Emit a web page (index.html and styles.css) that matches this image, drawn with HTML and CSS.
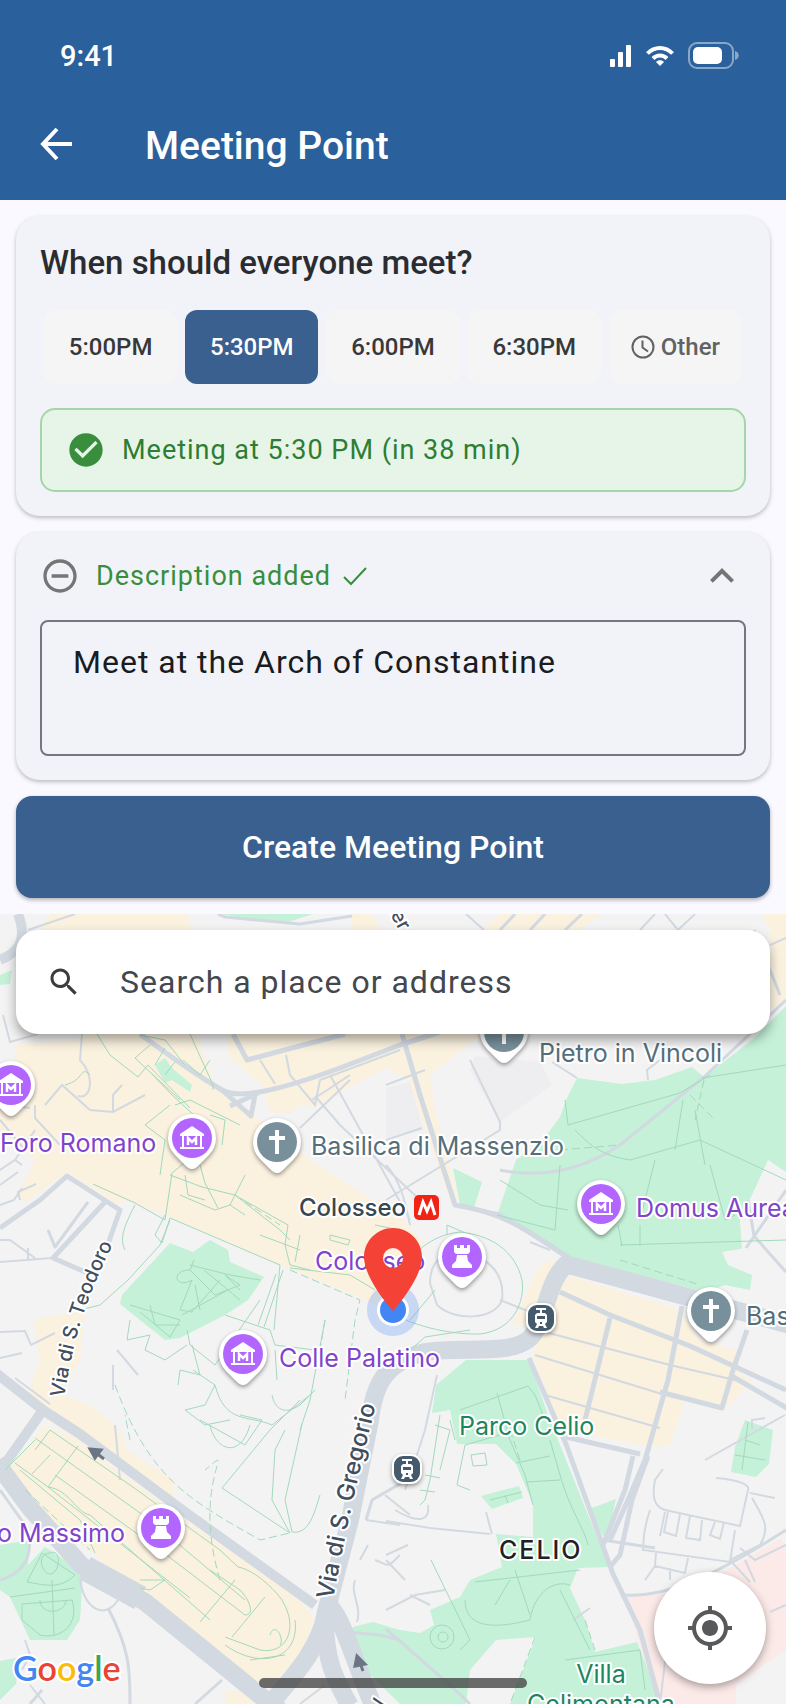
FILE: index.html
```html
<!DOCTYPE html>
<html lang="en">
  <head>
    <meta charset="UTF-8" />
    <meta name="viewport" content="width=device-width, initial-scale=1.0" />
    <title>Meeting Point</title>
    <link rel="stylesheet" href="styles.css">
  </head>
  <body>
    <header class="app-header">
      <div class="status-bar">
        <span class="status-time">9:41</span>
        <div class="status-icons">
          <svg width="22" height="24" viewBox="0 0 22 24" fill="#fff">
            <rect x="0" y="15" width="5" height="8" rx="1" />
            <rect x="8" y="8" width="5" height="15" rx="1" />
            <rect x="16" y="1" width="5" height="22" rx="1" />
          </svg>
          <svg width="28" height="22" viewBox="0 0 28 22" fill="none" stroke="#fff" stroke-width="4">
            <path d="M1.5 8.500C8.500 1 19.500 1 26.500 8.500" />
            <path d="M7 13.500C11 9.500 17 9.500 21 13.500" />
            <path d="M14 21l-4-4c2-2.200 6-2.200 8 0z" fill="#fff" stroke="none" />
          </svg>
          <svg width="52" height="28" viewBox="0 0 52 28">
            <rect x="1" y="1" width="44" height="25" rx="8" fill="none" stroke="#fff" stroke-opacity="0.45" stroke-width="2" />
            <rect x="5" y="5" width="29" height="17" rx="5" fill="#fff" />
            <path d="M47 9c5 1 5 8 0 9z" fill="#fff" fill-opacity="0.45" />
          </svg>
        </div>
      </div>
      <div class="toolbar">
        <button class="back-button" aria-label="Back">
          <svg width="34" height="38" viewBox="0 0 34 38" fill="none" stroke="#fff" stroke-width="4">
            <path d="M18 2L4 17l14 15M4 17h29" />
          </svg>
        </button>
        <h1>Meeting Point</h1>
      </div>
    </header>

    <main>
      <div class="form">
        <section class="card">
          <h2>When should everyone meet?</h2>
          <div class="times">
            <button class="time">5:00PM</button>
            <button class="time selected">5:30PM</button>
            <button class="time">6:00PM</button>
            <button class="time">6:30PM</button>
            <button class="time other">
              <svg width="24" height="24" viewBox="0 0 24 24" fill="none" stroke="currentColor" stroke-width="2">
                <circle cx="12" cy="12" r="10.500" />
                <path d="M11.500 5.500V12.500l5.500 4" />
              </svg>
              Other
            </button>
          </div>
          <div class="notice">
            <svg width="40" height="40" viewBox="0 0 24 24" fill="#388e3c">
              <path d="M12 2C6.480 2 2 6.480 2 12s4.480 10 10 10 10-4.480 10-10S17.520 2 12 2zm-2 15l-5-5 1.410-1.410L10 14.170l7.590-7.590L19 8l-9 9z" />
            </svg>
            <span>Meeting at 5:30 PM (in 38 min)</span>
          </div>
        </section>

        <section class="card">
          <button class="description-toggle">
            <svg width="40" height="40" viewBox="0 0 24 24" fill="#757575">
              <path d="M7 11v2h10v-2H7zm5-9C6.480 2 2 6.480 2 12s4.480 10 10 10 10-4.480 10-10S17.520 2 12 2zm0 18c-4.410 0-8-3.590-8-8s3.590-8 8-8 8 3.590 8 8-3.590 8-8 8z" />
            </svg>
            <label for="description">Description added</label>
            <svg width="28" height="28" viewBox="0 0 28 28" fill="none" stroke="#388e3c" stroke-width="2">
              <path d="M3 15l7 7L25 6" />
            </svg>
            <svg class="chevron" width="24" height="24" viewBox="6 6 12 12" fill="#757575">
              <path d="M12 8l-6 6 1.410 1.410L12 10.830l4.590 4.580L18 14z" />
            </svg>
          </button>
          <textarea id="description">Meet at the Arch of Constantine</textarea>
        </section>

        <button class="create-button">Create Meeting Point</button>
      </div>

      <div class="map">
        <svg class="map-canvas" viewBox="0 914 786 790" preserveAspectRatio="xMidYMin slice">
          <defs>
            <path id="pin" d="M0 31C-3 31-5 29-7 27L-17 17A24 24 0 1 1 17 17L7 27C5 29 3 31 0 31z" />
            <g id="museum">
              <use href="#pin" class="pin" />
              <circle r="20" fill="#b266ff" />
              <path d="M-12-4L0-12 12-4v2H-12z" fill="#fff" />
              <path d="M-9-3V9M9-3V9" stroke="#fff" stroke-width="2" />
              <path d="M-12 10H12" stroke="#fff" stroke-width="2" />
              <path d="M-4 7V0l4 4 4-4v7" fill="none" stroke="#fff" stroke-width="2.500" />
            </g>
            <g id="castle">
              <use href="#pin" class="pin" />
              <circle r="20" fill="#b266ff" />
              <path d="M-8-12h3v3h3v-3h4v3h3v-3h3v7l-2 2H-6l-2-2zM-5-2H5L6 4l4 4v3H-10V8l4-4z" fill="#fff" />
            </g>
            <g id="church">
              <use href="#pin" class="pin" />
              <circle r="20" fill="#78909c" />
              <path d="M-2-12h4v6h6v4H2v14h-4V-2h-6v-4h6z" fill="#fff" />
            </g>
            <g id="tram">
              <rect x="-15" y="-15" width="30" height="30" rx="11" class="pin" />
              <rect x="-13" y="-13" width="26" height="26" rx="9" fill="#455a6c" />
              <path d="M-5-10H5v2H1v3h3l2 2v7L4 6l2 4H3L2 8h-4l-1 2h-3l2-4-2-2v-7l2-2h3v-3h-4z" fill="#fff" />
              <path d="M-4-2h8v3h-8zM-1 4h2v2h-2z" fill="#455a6c" />
            </g>
          </defs>

          <rect y="914" width="786" height="790" fill="#f4f3f4" />

          <!-- built up areas -->
          <g fill="#faf1df">
            <path d="M50 914H188L192 930H40zM352 914H372L380 930H352zM500 914H600L580 930H480zM762 914H786V1000L770 1010V930z" />
            <path d="M15 1045L75 1040 85 1034H197L215 1085 250 1112 310 1160 400 1217 425 1245 375 1305 360 1298 280 1265 165 1215 125 1200 118 1205 68 1172 25 1202 18 1195 35 1160 0 1130V1075L15 1060z" />
            <path d="M228 1034H483L455 1055 430 1075 435 1110 458 1200 450 1200 432 1150 408 1080 386 1068 314 1107 300 1105 290 1114 270 1112 262 1085 228 1056z" />
            <path d="M33 1320L85 1310 80 1360 60 1395 90 1405 120 1430 127 1450 173 1480 173 1497 150 1490 53 1424 25 1400 40 1360z" />
            <path d="M45 1425L75 1440 200 1530 300 1600 314 1618 300 1660 262 1690 200 1645 140 1600 95 1555 30 1505 6 1472z" />
            <path d="M570 1276L680 1310 700 1340 735 1350 740 1375 752 1380 730 1405 685 1400 670 1445 655 1447 560 1430 533 1355 555 1290zM535 1274L548 1260 555 1262 525 1325 512 1325zM225 1704V1692L245 1690 255 1704z" />
          </g>
          <path d="M475 1056L540 1062 552 1085 500 1122 470 1070zM386 1088L410 1082 423 1130 386 1138z" fill="#eeedef" />
          <path d="M626 1597L663 1594 720 1574 780 1539 786 1545V1650L736 1684V1704H656z" fill="#fceae8" />

          <!-- parks -->
          <g fill="#c4f1d7">
            <path d="M222 914H313L285 923 250 920zM0 975L12 970 10 984 0 985z" />
            <path d="M577 1078L622 1084 655 1080 692 1067 704 1077 752 1040 786 1006V1180L769 1160 740 1220 746 1248 722 1252 728 1265 752 1275 750 1290 725 1285 705 1292 640 1275 565 1255 526 1233 497 1215 516 1160 543 1140 560 1117 566 1100z" />
            <path d="M453 1168L482 1182 474 1208 460 1205z" />
            <path d="M170 1243L193 1252 210 1240 228 1250 230 1262 264 1277 248 1300 225 1315 180 1338 165 1340 120 1304 122 1295z" />
            <path d="M155 1065L165 1058 172 1068 192 1085 190 1092 172 1080 165 1083z" />
            <path d="M466 1360H529L548 1415 609 1567 578 1568 570 1588 585 1620 595 1652 637 1642 650 1675 660 1704H510L536 1637 496 1640 470 1670 466 1704H400L345 1650 353 1627 373 1622 400 1630 420 1633 434 1625 430 1610 460 1597 470 1580 502 1567 496 1534 533 1537 533 1504 516 1464 496 1444H457L450 1410 432 1413 436 1385z" />
            <path d="M481 1496L519 1486 523 1498 492 1509zM589 1509L616 1499 608 1534 603 1536zM745 1420L773 1430 769 1464 756 1477 731 1472 735 1447z" />
            <path d="M0 1545L30 1540 28 1565 45 1547 83 1572 80 1620 67 1640 30 1640 10 1597 0 1590zM0 1661L20 1657 16 1684 0 1700z" />
          </g>
          <path d="M768 1160L786 1172V1245L742 1250 740 1222z" fill="#f4f3f4" />

          <!-- main roads -->
          <g class="road">
            <path class="w12" d="M18 914C30 945 12 955 0 960" />
            <path class="w6" d="M140 1034C175 1060 205 1080 222 1090S280 1090 340 1068L400 1045 440 1032" />
            <path class="w6" d="M233 1034L247 1060 345 1034M255 1095L251 1116 222 1090M230 1106L258 1093" />
            <path class="w6" d="M402 1034L420 1095 455 1205C500 1212 520 1225 569 1258" />
            <path class="w6" d="M0 1228L40 1200 67 1176 120 1210 108 1244M105 1202L53 1258 90 1274" />
            <path class="w4" d="M88 1202L55 1247 48 1230M218 914L225 917 300 924 352 916" />
            <path class="w12" d="M-4 1373L43 1410 80 1434 185 1512 315 1605" />
            <path class="w12" d="M43 1410L2 1468" />
            <path class="w18" d="M-4 1462L30 1508 82 1566 145 1602 262 1697 280 1710" />
            <path class="w25" d="M85 1568L140 1598" />
            <path class="w18" d="M569 1262C545 1280 548 1320 530 1338S460 1346 425 1352C385 1362 374 1385 370 1420L350 1520 326 1612C320 1650 290 1680 270 1704" />
            <path class="w18" d="M330 1606C345 1625 350 1650 375 1710M325 1620C325 1660 335 1680 350 1706" />
            <path class="w18" d="M565 1264L640 1284 790 1325" />
            <path class="w6" d="M560 1292L610 1315 690 1346 786 1390M730 1375L790 1410" />
            <path class="w6" d="M610 1318L585 1420M682 1306L668 1380 645 1460 628 1500 610 1540M747 1330L733 1370 722 1408 660 1392" />
            <path class="w6" d="M529 1358L566 1444 613 1574 640 1630 660 1704M633 1456L625 1490 603 1545M648 1456L632 1500 620 1555 610 1567M566 1437L640 1454" />
            <path class="w4" d="M624 1595C670 1598 720 1572 786 1530M603 1540L655 1548M366 1520L372 1500 410 1478M108 1608C130 1650 130 1670 130 1704M195 1704L222 1680M400 1640L380 1635 345 1632" />
            <path class="w4" d="M570 1260L500 1214 455 1205 402 1035M515 914L500 930M545 914L530 930M582 914L565 930M754 930L780 995M748 1200L754 1236 786 1272M746 1248L786 1190" />
            <path class="w4" d="M386 1629L450 1685 470 1704M30 1704L42 1690M0 1580C35 1570 32 1540 25 1525L0 1490M500 1170C550 1180 590 1165 620 1145L704 1077 786 1000" />
          </g>

          <!-- streets -->
          <g class="street">
            <path d="M0 1262L52 1258M0 1240L10 1240 35 1258M28 1248V1260M0 1332L25 1331 31 1345 55 1333M0 1358L22 1353M50 1404L15 1378M20 1200L18 1192 36 1184M35 1105V1118L60 1145M45 1105L62 1085 90 1110 113 1112 145 1095M113 1112V1095L122 1085" />
            <path d="M82 1034L80 1060C95 1075 92 1100 78 1096M3 1015L10 1042 38 1034M28 930L75 914M260 1060L275 1084M286 1055L290 1075 315 1105 320 1080 400 1050M330 1075L410 1220M300 1128L350 1080M315 1096L340 1125 420 1200M312 1100L350 1075" />
            <path d="M386 1085L425 1070M386 1140L422 1128M470 1060L500 1122 500 1130 386 1200M552 1062L577 1078M648 1080L647 1070 660 1060M466 914L484 930M640 930L655 914M665 914L678 930 695 914M770 945L786 938M386 1165C400 1180 405 1200 410 1225" />
            <path d="M430 1283C430 1260 445 1250 465 1253 490 1258 505 1275 502 1300 495 1320 455 1322 437 1305zM500 1300L530 1312M545 1332L670 1365 735 1380M535 1355L600 1375 665 1395M545 1395L660 1428M785 1415L705 1460M550 1250L530 1242" />
            <path d="M663 1469L655 1480C650 1505 660 1508 665 1510L740 1526 748 1490C750 1485 740 1480 716 1478M750 1493L775 1498M752 1498C765 1520 770 1528 760 1545L730 1560M650 1510C640 1540 645 1545 643 1550L730 1562 735 1530M665 1512L660 1536M668 1512L664 1532 676 1536 680 1514M690 1516L686 1538 700 1540 702 1520M715 1522L710 1535 720 1539 724 1522M656 1552L655 1566 685 1573 688 1558M655 1566L645 1580M670 1568V1580" />
            <path d="M386 1521L430 1528 490 1534M486 1512L492 1534M386 1555L408 1545M386 1560L405 1580M386 1610L415 1595 445 1590M410 1595L430 1605M355 1580C350 1595 362 1605 357 1622M395 1510C420 1525 430 1520 428 1505M366 1520L400 1525M368 1545L360 1560M385 1495L410 1515M375 1560C390 1565 385 1570 400 1555M120 1480L115 1425M117 1350L138 1375M113 1365V1390" />
            <path d="M590 1608L573 1620M730 1560L750 1582M786 1605L770 1612M740 1548L755 1560 786 1545M660 1704L665 1662 720 1660M752 1430V1420L765 1418M745 1560L755 1582M80 1580C85 1610 105 1620 118 1600M25 1640L30 1655 22 1670M30 1685L45 1704M300 1704L325 1685" />
            <path d="M437 1375L425 1430 412 1470 405 1490M0 1170L15 1160 22 1165M0 1185L18 1172M0 1205L14 1200 22 1188M5 1105L30 1108M0 1120L25 1150M15 1160L35 1130" />
          </g>

          <!-- footpaths -->
          <g class="path">
            <path d="M97 1034L110 1055 138 1077 148 1065 190 1108M150 1045L135 1058 180 1100M150 1072L172 1095 210 1130M165 1048L155 1065M175 1062L165 1075M190 1034L213 1085V1090M183 1060L200 1075 210 1060M140 1035L165 1040 185 1065M175 1105L190 1100 210 1110 240 1125M210 1115L225 1120 222 1145M145 1125L170 1105M145 1125L165 1140 160 1175M65 1085C85 1080 80 1065 90 1075" />
            <path d="M93 1184L135 1203 165 1220 172 1173 188 1160M135 1205C122 1230 120 1240 125 1250M165 1215L155 1235 162 1243 170 1218 280 1265 274 1330M170 1220L160 1245 128 1280 100 1305 80 1310M180 1195L215 1210 230 1205 245 1215M205 1183L200 1165M170 1175L202 1187 235 1195 280 1230 290 1240M240 1198L288 1225 285 1245 290 1265 310 1270M330 1235L350 1240 348 1245 330 1240zM205 1183L218 1208M185 1175L188 1195 205 1200M245 1175L230 1205M290 1268L350 1275 375 1290M260 1235L300 1250M300 1235L295 1262M375 1225L400 1230" />
            <path d="M258 1325L276 1274M264 1327L283 1270M194 1260L190 1270C170 1270 175 1290 192 1280L180 1310 192 1312 220 1280M190 1270L215 1295 240 1285 225 1275 240 1290M195 1285L200 1310M130 1305L180 1320 170 1337 140 1312M150 1305L155 1325 180 1325M190 1265L230 1275 260 1280M204 1270L240 1300M182 1315L228 1290" />
            <path d="M130 1320L127 1340 150 1335 145 1350 165 1360 187 1345M187 1330L190 1345 215 1365 260 1300M192 1345L200 1375 180 1370 178 1385M193 1370L215 1385 205 1405 185 1410 205 1425 230 1420M215 1385C225 1425 250 1415 272 1425L310 1395M240 1415L262 1420 245 1445 200 1420M272 1395C275 1410 285 1415 300 1405L315 1390M225 1315L270 1330 275 1345 315 1350M275 1350L277 1380M300 1400L270 1430 222 1488M285 1430L275 1450 272 1500 290 1533M302 1424L285 1500 292 1532C310 1535 315 1510 320 1495M222 1488L290 1533M250 1425C240 1460 215 1450 210 1425M325 1320L310 1400 300 1430" />
            <path d="M387 1310C400 1320 440 1335 480 1334 515 1330 525 1300 522 1280 515 1250 490 1235 460 1232 430 1235 410 1255 400 1275L388 1300M410 1350L425 1337 470 1330M447 1235V1225L470 1235M435 1290L410 1320" />
            <path d="M565 1100L568 1125 680 1093 710 1075M575 1130C590 1145 600 1155 630 1160L700 1140 786 1180M683 1100L675 1150M655 1160L640 1220M560 1165L555 1230 497 1215M620 1245L786 1240M695 1110L705 1165M618 1225L622 1246M640 1225V1246M710 1165L725 1220 735 1215M702 1078L786 1065M500 1180L540 1205 568 1210" />
            <path d="M35 1450L50 1430 130 1485 220 1550 238 1567C255 1570 275 1590 282 1600 300 1630 285 1655 260 1650L225 1637M15 1463L48 1487C70 1490 75 1512 90 1515M48 1487L78 1446M32 1474L50 1455M35 1438L150 1520 245 1600M55 1475L160 1550 245 1615C255 1615 250 1600 240 1590L210 1570M48 1487L190 1598M35 1440L5 1470M20 1470L80 1520 95 1553M90 1515L210 1620M232 1637L265 1597M200 1622L235 1580M225 1645C260 1670 300 1660 295 1620M250 1660L285 1655M270 1635C275 1620 285 1640 280 1645M140 1580L165 1580 150 1590 140 1588" />
            <path d="M27 1582L42 1553 75 1575C60 1590 45 1585 27 1582zM50 1553C30 1555 50 1590 58 1565 60 1555 55 1550 50 1553M10 1597L75 1588M22 1604L72 1600C80 1625 60 1640 40 1635L22 1620zM52 1580L54 1635M40 1600C40 1615 65 1615 66 1600" />
            <path d="M440 1415L430 1480 425 1500 420 1505M435 1425L450 1430 440 1470M425 1475L440 1478M420 1490L435 1492M450 1420L455 1440M470 1490L457 1485 465 1445 500 1435M471 1455L485 1453 487 1465 473 1466zM490 1500L522 1492M505 1495L508 1503M510 1440L525 1475 533 1505M550 1440L560 1475C570 1510 585 1530 588 1545M516 1463L550 1456M526 1482L560 1480M460 1410L528 1386 535 1395 545 1420M497 1393L510 1440" />
            <path d="M475 1582L580 1570M465 1600C465 1635 510 1625 530 1620C535 1590 555 1580 570 1585M515 1570L530 1615M510 1580L495 1605M431 1560L470 1640 460 1650M430 1637A12 12 0 1 1 454 1637A12 12 0 1 1 430 1637M438 1637A5 5 0 1 1 448 1637A5 5 0 1 1 438 1637M560 1590L590 1650M565 1660L640 1650 645 1690M745 1440L760 1445M748 1422L742 1470M735 1455L765 1460" />
          </g>
          <g class="path dashed">
            <path d="M115 1385C150 1480 190 1500 260 1540L290 1533M235 1195L280 1225M290 1270L360 1300 355 1320 345 1400M325 1320L320 1350M520 1460L510 1430M560 1150L620 1145M690 1095L715 1120M704 1080L695 1120M25 1490L90 1550M620 1260L700 1285M535 1637L510 1704M220 1580C190 1480 240 1440 205 1470M585 1620L595 1650M130 1440L125 1415" />
          </g>

          <!-- one way arrows -->
          <path d="M104 1459L95 1452M90 1449l11 1-6 8z" class="arrow" />
          <path d="M363 1671L359 1660M357 1656l8 8-10 2z" class="arrow" />

          <!-- place names -->
          <g class="label museum">
            <text x="0" y="1152">Foro Romano</text>
            <text x="636" y="1217">Domus Aurea</text>
            <text x="315" y="1270">Colosseo</text>
            <text x="279" y="1367">Colle Palatino</text>
            <text x="125" y="1542" text-anchor="end">o Massimo</text>
          </g>
          <g class="label landmark">
            <text x="539" y="1062">Pietro in Vincoli</text>
            <text x="311" y="1155">Basilica di Massenzio</text>
            <text x="746" y="1325">Bas</text>
          </g>
          <g class="label park">
            <text x="459" y="1435">Parco Celio</text>
            <text x="601" y="1683" text-anchor="middle">Villa</text>
            <text x="601" y="1713" text-anchor="middle">Celimontana</text>
          </g>
          <text class="label station" x="299" y="1216">Colosseo</text>
          <text class="label district" x="499" y="1559">CELIO</text>
          <path id="teodoro" d="M64 1398C72 1350 80 1310 114 1242" fill="none" />
          <path id="gregorio" d="M333 1600C343 1545 352 1500 382 1380" fill="none" />
          <text class="label street-name"><textPath href="#teodoro">Via di S. Teodoro</textPath></text>
          <text class="label street-name big"><textPath href="#gregorio">Via di S. Gregorio</textPath></text>
          <text class="label street-name" transform="translate(388 910) rotate(62)">ler</text>
          <text class="label street-name" transform="translate(384 1714) rotate(-75)">V</text>

          <use href="#museum" x="11" y="1085" />
          <use href="#museum" x="192" y="1138" />
          <use href="#museum" x="243" y="1354" />
          <use href="#museum" x="601" y="1204" />
          <use href="#castle" x="462" y="1257" />
          <use href="#castle" x="161" y="1528" />
          <use href="#church" x="504" y="1032" />
          <use href="#church" x="277" y="1142" />
          <use href="#church" x="711" y="1311" />
          <use href="#tram" x="541" y="1318" />
          <use href="#tram" x="407" y="1469" />
          <rect x="414" y="1195" width="25" height="25" rx="5" fill="#f02314" />
          <path d="M419 1215L423 1202 427 1211 431 1202 435 1215" fill="none" stroke="#fff" stroke-width="3" />

          <circle cx="393" cy="1310" r="26" fill="#4285f4" fill-opacity="0.25" />
          <circle cx="393" cy="1310" r="16" fill="#fff" />
          <circle cx="393" cy="1310" r="13" fill="#4285f4" />
          <path d="M393 1228C377 1228 364 1241 364 1257 364 1279 393 1311 393 1311S422 1279 422 1257C422 1241 409 1228 393 1228zM393 1268A10 10 0 1 1 393 1248A10 10 0 1 1 393 1268z" fill="#f44336" />
        </svg>

        <div class="search">
          <label for="search-input" aria-label="Search a place or address">
            <svg width="36" height="36" viewBox="0 0 24 24" fill="#3c3c3f">
              <path d="M15.500 14h-.79l-.28-.27C15.410 12.590 16 11.110 16 9.500 16 5.910 13.090 3 9.500 3S3 5.910 3 9.500 5.910 16 9.500 16c1.610 0 3.090-.59 4.230-1.570l.27.28v.79l5 4.990L20.490 19l-4.990-5zm-6 0C7.010 14 5 11.990 5 9.500S7.010 5 9.500 5 14 7.010 14 9.500 11.990 14 9.500 14z" />
            </svg>
          </label>
          <input id="search-input" type="text" placeholder="Search a place or address" />
        </div>

        <div class="google-logo"><span class="blue">G</span><span class="red">o</span><span class="yellow">o</span><span class="blue">g</span><span class="green">l</span><span class="red">e</span></div>

        <button class="locate-button" aria-label="My location">
          <svg width="48" height="48" viewBox="0 0 24 24" fill="#58595b">
            <path d="M12 8c-2.210 0-4 1.790-4 4s1.790 4 4 4 4-1.790 4-4-1.790-4-4-4zm8.940 3c-.46-4.170-3.770-7.480-7.940-7.940V1h-2v2.060C6.830 3.520 3.520 6.830 3.060 11H1v2h2.060c.46 4.170 3.770 7.480 7.940 7.940V23h2v-2.060c4.170-.46 7.480-3.770 7.940-7.940H23v-2h-2.060zM12 19c-3.870 0-7-3.130-7-7s3.130-7 7-7 7 3.130 7 7-3.130 7-7 7z" />
          </svg>
        </button>
        <div class="home-indicator"></div>
      </div>
    </main>
  </body>
</html>
```
FILE: styles.css
```css
* {
  box-sizing: border-box;
}
body {
  margin: 0;
  min-height: 100vh;
  display: flex;
  flex-direction: column;
  background-color: #f9f9ff;
  font-family: Roboto, sans-serif;
}
button,
input,
textarea {
  font-family: inherit;
}
button {
  border: none;
  padding: 0;
  cursor: pointer;
}
svg {
  display: block;
  flex-shrink: 0;
}

/* header */
.app-header {
  background-color: #2a609b;
  color: #fff;
}
.status-bar {
  height: 92px;
  padding: 20px 46px 0 60px;
  display: flex;
  justify-content: space-between;
  align-items: center;
}
.status-time {
  font-size: 29px;
  font-weight: 500;
}
.status-icons {
  display: flex;
  align-items: center;
  gap: 14px;
}
.toolbar {
  height: 108px;
  padding: 0 39px;
  display: flex;
  align-items: center;
  gap: 72px;
}
.back-button {
  background: none;
}
.toolbar h1 {
  margin: 0;
  font-size: 39px;
  font-weight: 500;
}

/* form */
main {
  flex: 1;
  display: flex;
  flex-direction: column;
}
.form {
  padding: 16px;
  display: flex;
  flex-direction: column;
  gap: 16px;
}
.card {
  padding: 24px;
  display: flex;
  flex-direction: column;
  gap: 24px;
  background-color: #f2f3f9;
  border-radius: 24px;
  box-shadow: 0 2px 4px rgba(0, 0, 0, 0.25);
}
.card h2 {
  margin: 0;
  font-size: 33px;
  line-height: 46px;
  font-weight: 500;
  color: #2b2c30;
}
.times {
  display: grid;
  grid-template-columns: repeat(5, 1fr);
  gap: 8px;
  padding: 0 4px;
}
.time {
  height: 74px;
  display: flex;
  justify-content: center;
  align-items: center;
  gap: 6px;
  background-color: #f5f5f6;
  border-radius: 12px;
  color: #38383a;
  font-size: 24px;
  font-weight: 500;
}
.time.selected {
  background-color: #3a608f;
  color: #fff;
}
.time.other {
  color: #626264;
}
.notice {
  padding: 20px 24px;
  display: flex;
  align-items: center;
  gap: 16px;
  background-color: #e7f5e9;
  border: 2px solid #a5d6a7;
  border-radius: 15px;
  color: #2e7d32;
  font-size: 27px;
  letter-spacing: 1px;
}
.description-toggle {
  display: flex;
  align-items: center;
  gap: 16px;
  background: none;
  color: #388e3c;
  font-size: 27px;
  letter-spacing: 1px;
}
.description-toggle label {
  margin-right: -6px;
}
.chevron {
  margin-left: auto;
  margin-right: 12px;
}
textarea {
  height: 136px;
  padding: 20px 31px;
  resize: none;
  background: none;
  border: 2px solid #74777f;
  border-radius: 8px;
  color: #191c20;
  font-size: 32px;
  line-height: 40px;
  letter-spacing: 1px;
}
.create-button {
  height: 102px;
  background-color: #3a608f;
  border-radius: 16px;
  box-shadow: 0 2px 4px rgba(0, 0, 0, 0.3);
  color: #fff;
  font-size: 32px;
  font-weight: 500;
}

/* map */
.map {
  position: relative;
  flex: 1;
  min-height: 600px;
  overflow: hidden;
  padding: 16px;
}
.map-canvas {
  position: absolute;
  inset: 0;
  width: 100%;
  height: 100%;
}
.road {
  fill: none;
  stroke: #d2d9e1;
  stroke-linejoin: round;
}
.w4 {
  stroke-width: 3px;
}
.w6 {
  stroke-width: 5px;
}
.w12 {
  stroke-width: 10px;
}
.w18 {
  stroke-width: 18px;
}
.w25 {
  stroke-width: 25px;
}
.street {
  fill: none;
  stroke: #d3d9e0;
  stroke-width: 2px;
}
.path {
  fill: none;
  stroke: #a2d9bd;
  stroke-width: 1px;
}
.dashed {
  stroke-dasharray: 8 4;
}
.arrow {
  fill: #6b7684;
  stroke: #6b7684;
  stroke-width: 3px;
}
.pin {
  fill: #fff;
  filter: drop-shadow(0 2px 2px rgba(0, 0, 0, 0.4));
}
.label {
  font-family: Inter, sans-serif;
  font-size: 25px;
  stroke: #fff;
  stroke-width: 4px;
  stroke-linejoin: round;
  paint-order: stroke;
}
.label.museum {
  fill: #8143cc;
}
.label.landmark {
  fill: #546e7a;
}
.label.park {
  fill: #1e8560;
}
.label.station {
  fill: #37474f;
  font-size: 24px;
  font-weight: 500;
}
.label.district {
  fill: #202124;
  font-weight: 500;
  letter-spacing: 2px;
}
.label.street-name {
  fill: #414e5e;
  font-size: 20px;
  font-weight: 500;
}
.label.street-name.big {
  font-size: 24px;
}
.search {
  position: relative;
  height: 104px;
  padding: 0 30px;
  display: flex;
  align-items: center;
  gap: 38px;
  background-color: #fff;
  border-radius: 22px;
  box-shadow: 0 6px 12px rgba(0, 0, 0, 0.35);
}
.search input {
  flex: 1;
  min-width: 0;
  padding: 0;
  border: none;
  outline: none;
  background: none;
  color: #43474e;
  font-size: 32px;
  letter-spacing: 1px;
}
.search input::placeholder {
  color: #43474e;
  opacity: 1;
}
.google-logo {
  position: absolute;
  left: 13px;
  bottom: 16px;
  font-family: Lato, sans-serif;
  font-size: 34px;
  line-height: 40px;
  font-weight: 600;
  -webkit-text-stroke: 4px #fff;
  paint-order: stroke fill;
}
.blue {
  color: #4285f4;
}
.red {
  color: #ea4335;
}
.yellow {
  color: #fbbc05;
}
.green {
  color: #34a853;
}
.locate-button {
  position: absolute;
  right: 20px;
  bottom: 20px;
  width: 112px;
  height: 112px;
  display: flex;
  justify-content: center;
  align-items: center;
  background-color: #fff;
  border-radius: 50%;
  box-shadow: 0 3px 8px rgba(0, 0, 0, 0.35);
}
.home-indicator {
  position: absolute;
  left: 33%;
  right: 33%;
  bottom: 16px;
  height: 10px;
  border-radius: 5px;
  background-color: rgba(60, 60, 60, 0.75);
}
```
